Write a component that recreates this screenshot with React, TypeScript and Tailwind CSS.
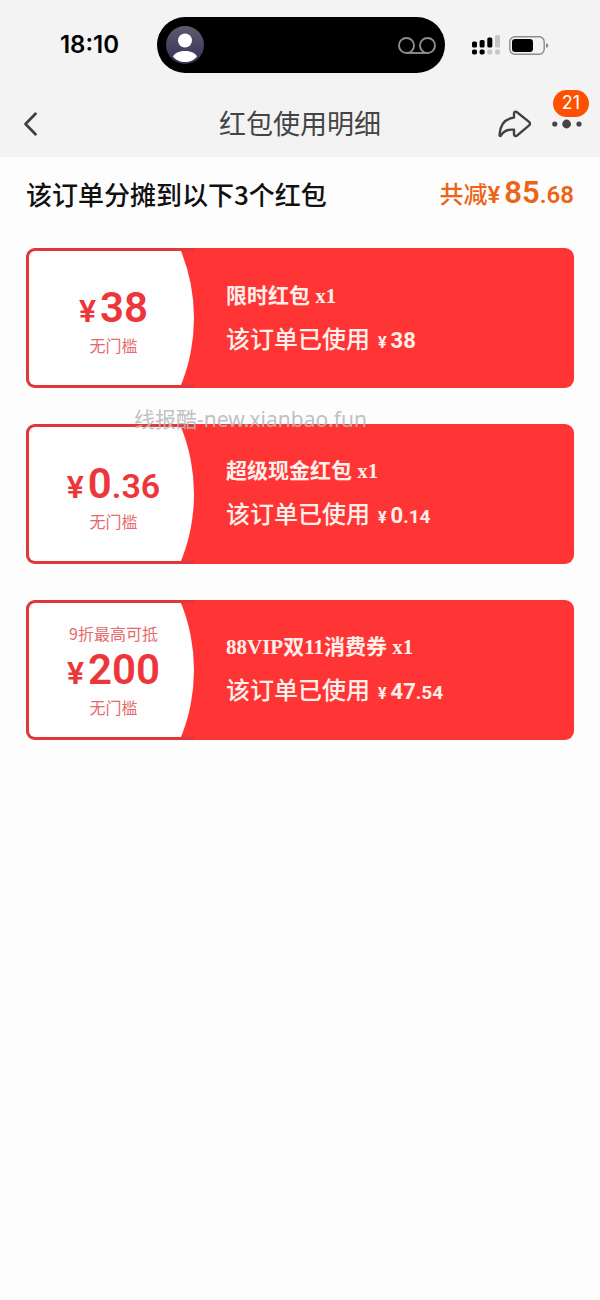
interface Coupon {
  id: string
  name: string
  tip?: string
  value: string
  condition: string
  used: string
}

const coupons: Coupon[] = [
  { id: 'limited', name: '限时红包', value: '38', condition: '无门槛', used: '38' },
  { id: 'cash', name: '超级现金红包', value: '0.36', condition: '无门槛', used: '0.14' },
  { id: 'vip', name: '88VIP双11消费券', tip: '9折最高可抵', value: '200', condition: '无门槛', used: '47.54' },
]

// 整数部分大，小数部分小
function splitPrice(price: string) {
  const [int, dec] = price.split('.')
  return { int, dec: dec ? `.${dec}` : '' }
}

function StatusBar() {
  return (
    <div className="grid grid-cols-[1fr_288px_1fr] items-center py-[17px] pl-0.5">
      <span className="pl-5 text-center font-['Inter',sans-serif] text-2xl font-semibold text-black">18:10</span>
      <div className="flex h-14 items-center justify-between rounded-full bg-black px-[9px]">
        <svg width="38" height="38" viewBox="0 0 38 38" aria-hidden="true">
          <defs>
            <linearGradient id="avatar" x1="0" y1="0" x2="0" y2="1">
              <stop offset="0" stopColor="#5d5a6b" />
              <stop offset="1" stopColor="#37305a" />
            </linearGradient>
          </defs>
          <circle cx="19" cy="19" r="19" fill="url(#avatar)" />
          <circle cx="19" cy="14.5" r="7" fill="#fff" />
          <path d="M7 30.500C9 26.500 14 25 19 25s10 1.500 12 5.500C28.500 34 24 36 19 36S9.500 34 7 30.500Z" fill="#fff" />
        </svg>
        <svg width="38" height="17" viewBox="0 0 38 17" fill="none" stroke="#8e8e8e" strokeWidth="1.900" aria-hidden="true">
          <circle cx="8.500" cy="8.500" r="7.500" />
          <circle cx="29.500" cy="8.500" r="7.500" />
          <path d="M8.500 16h21" />
        </svg>
      </div>
      <div className="flex items-center gap-[9px] pl-[27px]">
        <svg width="28" height="20" viewBox="0 0 28 20" aria-hidden="true">
          <g fill="#000">
            <rect x="0" y="6.500" width="5" height="6" rx="1.500" />
            <rect x="7.600" y="5" width="5" height="7.500" rx="1.500" />
            <rect x="15.300" y="2.500" width="5" height="10" rx="1.500" />
            <rect x="0" y="14.500" width="5" height="5" rx="1.700" />
            <rect x="7.600" y="14.500" width="5" height="5" rx="1.700" />
          </g>
          <g fill="#c6c6c6">
            <rect x="23" y="0" width="5" height="12.500" rx="1.500" />
            <rect x="15.300" y="14.500" width="5" height="5" rx="1.700" />
            <rect x="23" y="14.500" width="5" height="5" rx="1.700" />
          </g>
        </svg>
        <svg width="40" height="19" viewBox="0 0 40 19" aria-hidden="true">
          <rect x="0.800" y="0.800" width="34.400" height="17.400" rx="5" fill="none" stroke="#8c8c8c" strokeWidth="1.400" />
          <rect x="3" y="3" width="21" height="13" rx="3.300" fill="#000" />
          <path d="M37.200 7.200c1.300.4 2 1.200 2 2.300s-.7 1.900-2 2.300Z" fill="#777" />
        </svg>
      </div>
    </div>
  )
}

function NavBar() {
  return (
    <nav className="grid h-[67px] grid-cols-[1fr_auto_1fr] items-center px-[18px]">
      <button type="button" aria-label="返回" className="w-fit pl-1">
        <svg width="18" height="26" viewBox="0 0 18 26" fill="none" stroke="#414141" strokeWidth="2.800" strokeLinecap="round" strokeLinejoin="round">
          <path d="M13.500 2.800 3.500 13l10 10.200" />
        </svg>
      </button>
      <h1 className="text-[27px] text-[#444]">红包使用明细</h1>
      <div className="flex items-center justify-end gap-5">
        <button type="button" aria-label="分享">
          <svg width="34" height="28" viewBox="0 0 34 28" fill="none" stroke="#414141" strokeWidth="2.400" strokeLinejoin="round">
            <path d="M16 7.600V3.400c0-1.500 1.500-2.300 2.700-1.400l12.400 9.900c1.200 1 1.200 2.500 0 3.500L19 25.600c-1.300 1-3 .2-3-1.300v-4.500c-6-.7-10 .8-13 5.600-.6 1-1.600.6-1.500-.6C2 15.300 6.500 8.900 16 7.600Z" />
          </svg>
        </button>
        <button type="button" aria-label="更多" className="relative">
          <svg width="30" height="10" viewBox="0 0 30 10" fill="#444">
            <circle cx="2.800" cy="5" r="2.600" />
            <circle cx="14.600" cy="5" r="4.400" />
            <circle cx="27" cy="5" r="2.600" />
          </svg>
          <span className="absolute -top-[29px] left-px flex h-[27px] w-9 items-center justify-center rounded-full bg-[#fd5000] font-['Inter',sans-serif] text-lg text-white">
            21
          </span>
        </button>
      </div>
    </nav>
  )
}

function CouponCard({ coupon }: { coupon: Coupon }) {
  const value = splitPrice(coupon.value)
  const used = splitPrice(coupon.used)

  return (
    <li className="flex min-h-[140px] overflow-hidden rounded-[9px] bg-[#ff3535]">
      <div className="flex w-[168px] shrink-0 rounded-l-[9px] border-y-[3px] border-l-[3px] border-[#e0373a]">
        {/* 右侧圆弧边 */}
        <div className="flex flex-1 flex-col items-center justify-center rounded-l-md bg-[#fefefe] pl-1 [clip-path:circle(179px_at_-14px_50%)]">
          {coupon.tip && <p className="text-base leading-5 text-[#e56a6b]">{coupon.tip}</p>}
          <p className="flex h-[54px] items-baseline font-['Roboto',sans-serif] leading-[54px] font-semibold text-[#ec3639]">
            <span className="mr-1 text-[32px]">¥</span>
            <span className="text-[42px]">{value.int}</span>
            <span className="text-[34px]">{value.dec}</span>
          </p>
          <p className="text-base leading-5 text-[#e56a6b]">{coupon.condition}</p>
        </div>
      </div>
      <div className="flex flex-col justify-center gap-3 pl-8 text-[#fff0ec]">
        <h3 className="font-['Liberation_Serif','Noto_Sans_CJK_SC',serif] text-[21px] leading-[30px] font-bold">
          {coupon.name} x1
        </h3>
        <p className="flex items-baseline text-2xl leading-[30px] font-medium">
          该订单已使用
          <span className="ml-2 flex items-baseline font-['Roboto',sans-serif] font-bold">
            <span className="mr-1 text-base">¥</span>
            <span className="text-[22px]">{used.int}</span>
            <span className="text-[19px]">{used.dec}</span>
          </span>
        </p>
      </div>
    </li>
  )
}

export default function App() {
  const total = splitPrice('85.68')

  return (
    <div className="min-h-screen bg-[#fdfdfd] font-['Noto_Sans_CJK_SC',sans-serif]">
      <header className="bg-[#f3f3f3]">
        <StatusBar />
        <NavBar />
      </header>

      <main className="relative px-[26px] pt-4">
        <div className="flex items-center justify-between">
          <h2 className="text-[26px] leading-10 font-medium text-[#111]">该订单分摊到以下{coupons.length}个红包</h2>
          <p className="flex items-baseline text-2xl leading-10 font-medium text-[#ee6416]">
            共减
            <span className="flex items-baseline font-['Roboto',sans-serif] font-semibold">
              <span className="mr-1">¥</span>
              <span className="text-[31px]">{total.int}</span>
              <span>{total.dec}</span>
            </span>
          </p>
        </div>

        <ul className="mt-[33px] flex flex-col gap-9">
          {coupons.map(c => (
            <CouponCard key={c.id} coupon={c} />
          ))}
        </ul>

        {/* 水印 */}
        <p className="pointer-events-none absolute top-[247px] left-[134px] font-['Noto_Sans','Noto_Sans_CJK_SC',sans-serif] text-[21px] leading-[30px] text-[#b9b9b9]/90">
          线报酷-new.xianbao.fun
        </p>
      </main>
    </div>
  )
}
